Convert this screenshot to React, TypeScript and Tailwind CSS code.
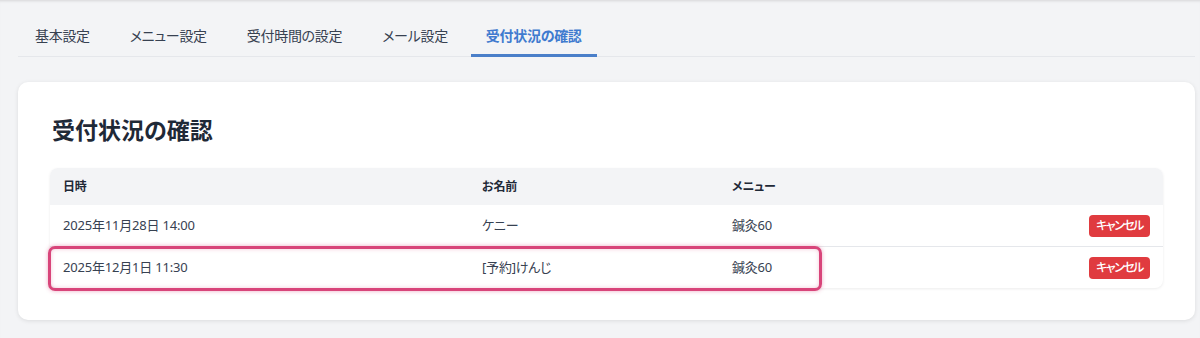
const tabs = ["基本設定", "メニュー設定", "受付時間の設定", "メール設定", "受付状況の確認"];

const rows = [
  { date: "2025年11月28日 14:00", name: "ケニー", menu: "鍼灸60" },
  { date: "2025年12月1日 11:30", name: "[予約]けんじ", menu: "鍼灸60" },
];

export default function App() {
  return (
    <div className="min-h-screen bg-[#f3f4f6] shadow-[inset_0_3px_3px_-2px_rgba(0,0,0,0.12)] font-['Noto_Sans','Noto_Sans_CJK_JP',sans-serif] [font-feature-settings:'palt'] text-[#374151]">
      <div className="pl-[18px] pr-[5px] pt-[26px]">
        <nav className="flex gap-[6px] border-b border-[#e5e7eb]">
          {tabs.map((t, i) => {
            const active = i === tabs.length - 1;
            return (
              <div
                key={t}
                className={
                  active
                    ? "px-[15px] pb-[8px] text-[14px] leading-[20px] font-semibold tracking-[-0.3px] text-[#3f7bcf] border-b-[3px] border-[#4a7fc9] -mb-px"
                    : "px-[17px] pb-[8px] text-[14px] leading-[20px] tracking-[-0.3px] text-[#374151] border-b-[3px] border-transparent -mb-px"
                }
              >
                {t}
              </div>
            );
          })}
        </nav>

        <div className="mt-[25px] bg-white rounded-[10px] shadow-[0_1px_4px_rgba(0,0,0,0.1)] px-[32px] pt-[32px] pb-[32px]">
          <h2 className="text-[23px] leading-[32px] font-bold text-[#1f2937] pl-[2px]">受付状況の確認</h2>

          <div className="relative mt-[22px] rounded-[8px] shadow-[0_1px_3px_rgba(0,0,0,0.08)] text-[13px] tracking-[-0.2px]">
            <div className="grid grid-cols-[419px_250px_1fr_auto] items-center h-[37px] bg-[#f3f4f6] rounded-t-[8px] text-[12px] font-semibold text-[#1f2937]">
              <div className="px-[13px]">日時</div>
              <div className="px-[13px]">お名前</div>
              <div className="px-[13px]">メニュー</div>
              <div className="px-[13px]" />
            </div>
            {rows.map((r, i) => (
              <div
                key={r.date}
                className={
                  i === 0
                    ? "grid grid-cols-[419px_250px_1fr_auto] items-center h-[42px] border-b border-[#e5e7eb]"
                    : "grid grid-cols-[419px_250px_1fr_auto] items-center h-[41px]"
                }
              >
                <div className="px-[13px]">{r.date}</div>
                <div className="px-[13px]">{r.name}</div>
                <div className="px-[13px]">{r.menu}</div>
                <div className="px-[13px]">
                  <button className="h-[22px] w-[61px] rounded-[4px] bg-[#e03b3f] text-white text-[12px] font-medium tracking-[-1.5px] leading-[22px]">
                    キャンセル
                  </button>
                </div>
              </div>
            ))}

            <div className="absolute left-[-2px] top-[78px] w-[774px] h-[45px] rounded-[7px] border-[3px] border-[#d8457a] shadow-[0_0_4px_rgba(216,69,122,0.45),inset_0_0_4px_rgba(216,69,122,0.3)] pointer-events-none" />
          </div>
        </div>
      </div>
    </div>
  );
}
